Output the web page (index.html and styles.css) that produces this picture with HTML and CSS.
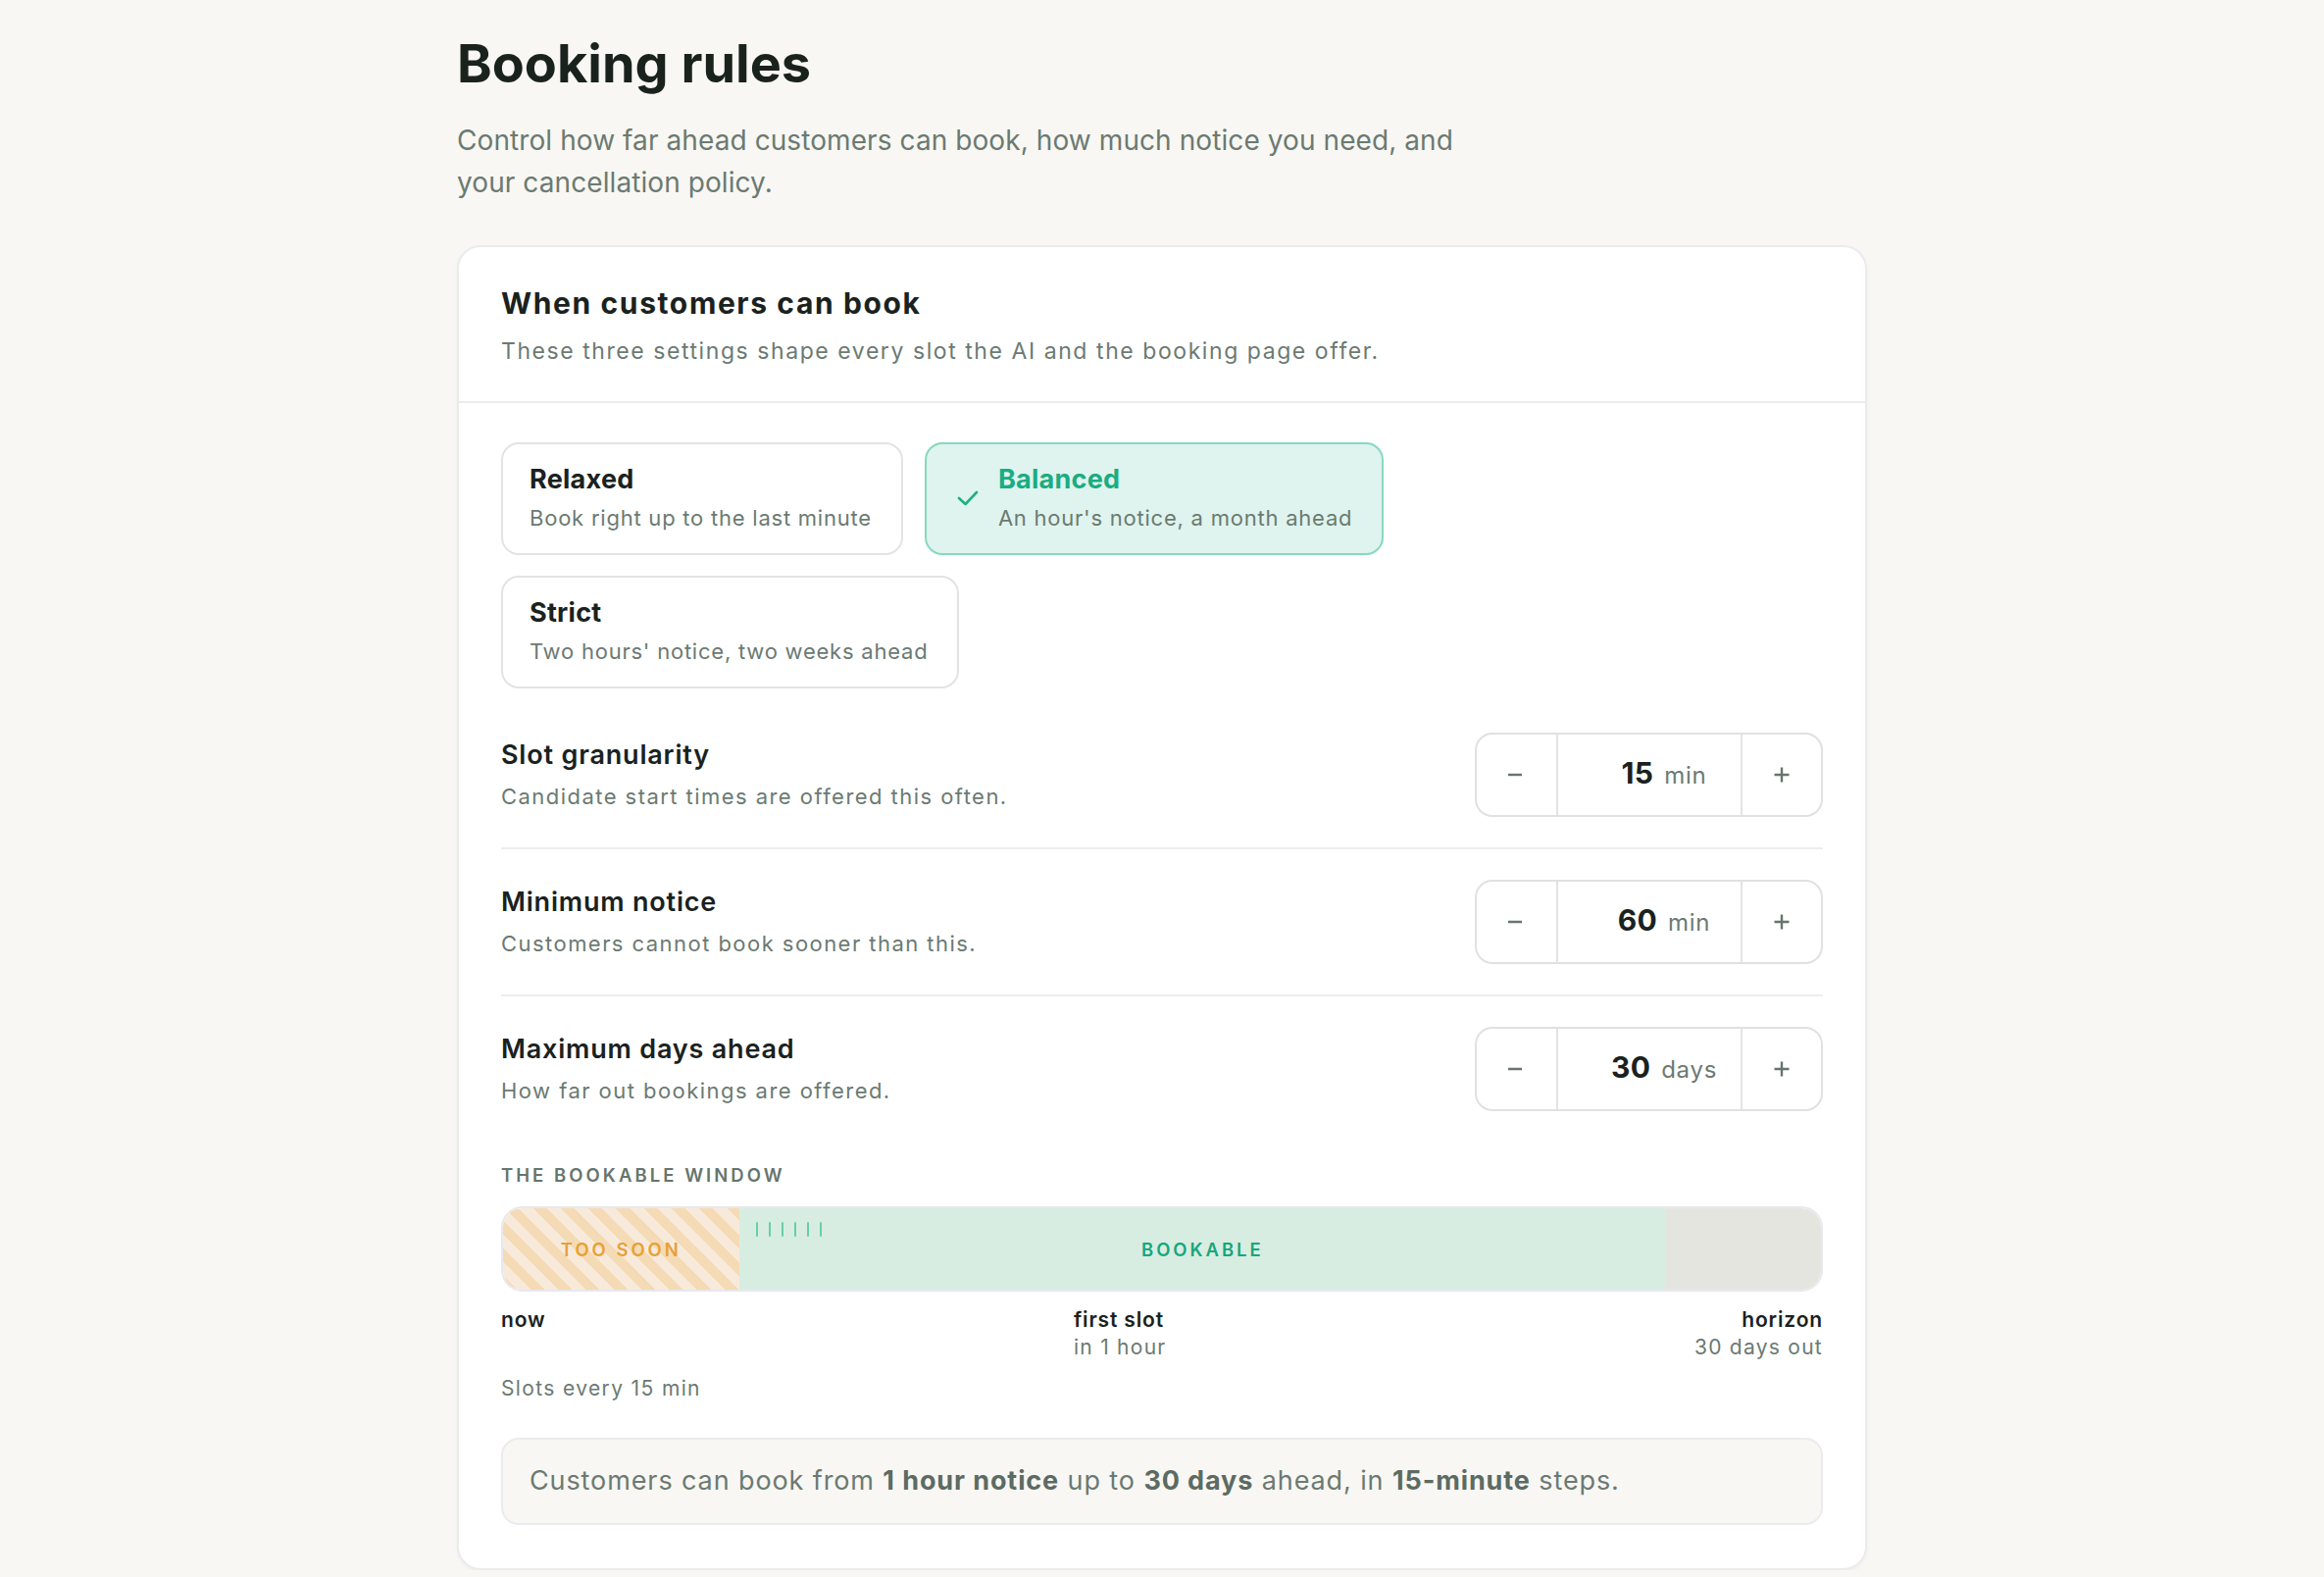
FILE: index.html
```html
<!DOCTYPE html>
<html lang="en">
<head>
<meta charset="utf-8">
<title>Booking rules</title>
<link rel="stylesheet" href="styles.css">
</head>
<body>
<main class="page">
  <h1 class="page-title">Booking rules</h1>
  <p class="page-sub">Control how far ahead customers can book, how much notice you need, and your cancellation policy.</p>

  <section class="card">
    <header class="card-head">
      <h2 class="card-title">When customers can book</h2>
      <p class="card-desc">These three settings shape every slot the AI and the booking page offer.</p>
    </header>

    <div class="card-body">
      <div class="presets">
        <button class="preset">
          <span class="preset-text">
            <span class="preset-title">Relaxed</span>
            <span class="preset-desc">Book right up to the last minute</span>
          </span>
        </button>
        <button class="preset preset-active">
          <svg class="check" width="22" height="16" viewBox="0 0 22 16"><polyline points="2,8 8.5,14 20,2" fill="none" stroke="#1fae86" stroke-width="2.6" stroke-linecap="round" stroke-linejoin="round"/></svg>
          <span class="preset-text">
            <span class="preset-title">Balanced</span>
            <span class="preset-desc">An hour's notice, a month ahead</span>
          </span>
        </button>
        <button class="preset">
          <span class="preset-text">
            <span class="preset-title">Strict</span>
            <span class="preset-desc">Two hours' notice, two weeks ahead</span>
          </span>
        </button>
      </div>

      <div class="settings">
        <div class="setting">
          <div class="setting-text">
            <div class="setting-label">Slot granularity</div>
            <div class="setting-desc">Candidate start times are offered this often.</div>
          </div>
          <div class="stepper">
            <button class="step-btn"><svg width="16" height="16" viewBox="0 0 16 16"><line x1="1" y1="8" x2="15" y2="8" stroke="#66756d" stroke-width="2.4"/></svg></button>
            <div class="step-value"><span class="num">15</span><span class="unit">min</span></div>
            <button class="step-btn step-plus"><svg width="16" height="16" viewBox="0 0 16 16"><line x1="0.5" y1="8" x2="15.5" y2="8" stroke="#66756d" stroke-width="2.4"/><line x1="8" y1="0.5" x2="8" y2="15.5" stroke="#66756d" stroke-width="2.4"/></svg></button>
          </div>
        </div>
        <div class="setting">
          <div class="setting-text">
            <div class="setting-label">Minimum notice</div>
            <div class="setting-desc">Customers cannot book sooner than this.</div>
          </div>
          <div class="stepper">
            <button class="step-btn"><svg width="16" height="16" viewBox="0 0 16 16"><line x1="1" y1="8" x2="15" y2="8" stroke="#66756d" stroke-width="2.4"/></svg></button>
            <div class="step-value"><span class="num">60</span><span class="unit">min</span></div>
            <button class="step-btn step-plus"><svg width="16" height="16" viewBox="0 0 16 16"><line x1="0.5" y1="8" x2="15.5" y2="8" stroke="#66756d" stroke-width="2.4"/><line x1="8" y1="0.5" x2="8" y2="15.5" stroke="#66756d" stroke-width="2.4"/></svg></button>
          </div>
        </div>
        <div class="setting">
          <div class="setting-text">
            <div class="setting-label">Maximum days ahead</div>
            <div class="setting-desc">How far out bookings are offered.</div>
          </div>
          <div class="stepper">
            <button class="step-btn"><svg width="16" height="16" viewBox="0 0 16 16"><line x1="1" y1="8" x2="15" y2="8" stroke="#66756d" stroke-width="2.4"/></svg></button>
            <div class="step-value"><span class="num">30</span><span class="unit">days</span></div>
            <button class="step-btn step-plus"><svg width="16" height="16" viewBox="0 0 16 16"><line x1="0.5" y1="8" x2="15.5" y2="8" stroke="#66756d" stroke-width="2.4"/><line x1="8" y1="0.5" x2="8" y2="15.5" stroke="#66756d" stroke-width="2.4"/></svg></button>
          </div>
        </div>
      </div>

      <div class="window">
        <div class="window-label">THE BOOKABLE WINDOW</div>
        <div class="bar">
          <div class="seg seg-soon" style="width: 17.9%"><span>TOO SOON</span></div>
          <div class="seg seg-book" style="width: 70.35%">
            <div class="ticks"><i></i><i></i><i></i><i></i><i></i><i></i></div>
            <span>BOOKABLE</span>
          </div>
          <div class="seg seg-horizon"></div>
        </div>
        <div class="marks">
          <div class="mark"><div class="mark-title">now</div></div>
          <div class="mark"><div class="mark-title">first slot</div><div class="mark-sub">in 1 hour</div></div>
          <div class="mark mark-end"><div class="mark-title">horizon</div><div class="mark-sub">30 days out</div></div>
        </div>
        <div class="slots-note">Slots every 15 min</div>
      </div>

      <div class="summary">Customers can book from <b>1 hour notice</b> up to <b>30 days</b> ahead, in <b>15-minute</b> steps.</div>
    </div>
  </section>
</main>
</body>
</html>
```

FILE: styles.css
```css
* { box-sizing: border-box; }

html, body {
  margin: 0;
  padding: 0;
}

body {
  background: #f9f7f3;
  font-family: "Inter", "Liberation Sans", sans-serif;
  color: #1b231f;
}

.page {
  width: 1438px;
  margin: 0 auto;
  padding-top: 33px;
}

.page-title {
  margin: 0;
  font-size: 54px;
  line-height: 64px;
  font-weight: 700;
  letter-spacing: 0;
  color: #1a221e;
}

.page-sub {
  margin: 25px 0 0;
  max-width: 1050px;
  font-size: 28px;
  line-height: 43px;
  color: #6b7a72;
  letter-spacing: 0.003em;
}

.card {
  margin-top: 42px;
  background: #fff;
  border: 2px solid #ebebef;
  border-radius: 24px;
  box-shadow: 0 2px 4px rgba(30, 30, 40, 0.04);
}

.card-head {
  padding: 39px 43px 34px;
  border-bottom: 2px solid #ececf0;
}

.card-title {
  margin: 0;
  font-size: 30px;
  line-height: 37px;
  font-weight: 700;
  color: #1a221e;
  letter-spacing: 0.054em;
}

.card-desc {
  margin: 13px 0 0;
  font-size: 23px;
  line-height: 34px;
  color: #6b7a72;
  letter-spacing: 0.068em;
}

.card-body {
  padding: 40px 43px 44px;
}

.presets {
  display: flex;
  flex-wrap: wrap;
  gap: 21px 22px;
  margin-bottom: 14px;
}

.preset {
  display: flex;
  align-items: center;
  gap: 20px;
  padding: 18px 30px 20px 27px;
  background: #fff;
  border: 2px solid #e2e4e2;
  border-radius: 18px;
  font-family: inherit;
  text-align: left;
  cursor: pointer;
}

.preset-active {
  padding-left: 31px;
  padding-right: 30px;
  background: #dff4ee;
  border-color: #86d9c0;
}

.check {
  display: block;
  flex: none;
}

.preset-text {
  display: flex;
  flex-direction: column;
  gap: 7px;
}

.preset-title {
  font-size: 27px;
  line-height: 35px;
  font-weight: 700;
  color: #1a221e;
  letter-spacing: 0.01em;
}

.preset-active .preset-title {
  color: #1aac82;
}

.preset-desc {
  font-size: 22px;
  line-height: 31px;
  color: #6b7a72;
  letter-spacing: 0.035em;
}

.setting {
  display: flex;
  align-items: center;
  justify-content: space-between;
  padding: 31px 0;
  border-bottom: 2px solid #ecedf0;
}

.setting:last-child {
  border-bottom: none;
}

.setting-label {
  font-size: 27px;
  line-height: 35px;
  font-weight: 600;
  color: #1a221e;
  letter-spacing: 0.03em;
}

.setting-desc {
  margin-top: 9px;
  font-size: 22px;
  line-height: 33px;
  color: #6b7a72;
  letter-spacing: 0.066em;
}

.stepper {
  display: flex;
  width: 355px;
  height: 86px;
  border: 2px solid #dfe2df;
  border-radius: 18px;
  background: #fff;
  overflow: hidden;
}

.step-btn {
  display: flex;
  align-items: center;
  justify-content: center;
  width: 81px;
  padding: 0 3px 0 0;
  border: none;
  background: transparent;
  cursor: pointer;
}

.step-btn svg {
  display: block;
}

.step-plus {
  width: 80px;
  padding: 0;
}

.step-value {
  flex: 1;
  display: flex;
  align-items: baseline;
  justify-content: center;
  gap: 11px;
  padding-left: 30px;
  padding-top: 19px;
  border-left: 2px solid #e2e4e2;
  border-right: 2px solid #e2e4e2;
}

.num {
  font-size: 30px;
  font-weight: 700;
  color: #1a221e;
  line-height: 40px;
  letter-spacing: 0.01em;
}

.unit {
  font-size: 24px;
  color: #6b7a72;
  letter-spacing: 0.03em;
}

.window {
  margin-top: 22px;
}

.window-label {
  font-size: 18.5px;
  line-height: 25px;
  font-weight: 600;
  letter-spacing: 0.165em;
  color: #66756d;
}

.bar {
  display: flex;
  margin-top: 19px;
  height: 87px;
  border: 2px solid #e8e8ee;
  border-radius: 22px;
  overflow: hidden;
}

.seg {
  position: relative;
  display: flex;
  align-items: center;
  justify-content: center;
  font-size: 18.5px;
  font-weight: 600;
  letter-spacing: 0.16em;
}

.seg-soon {
  background: repeating-linear-gradient(45deg, #f4dbb5 0 10px, #f8eadb 10px 20px);
  color: #e8a035;
}

.seg-book {
  background: #d8ede2;
  color: #17a67d;
}

.seg-horizon {
  flex: 1;
  background: #e5e5e0;
}

.ticks {
  position: absolute;
  left: 17px;
  top: 14px;
  display: flex;
  gap: 10.5px;
}

.ticks i {
  display: block;
  width: 2.5px;
  height: 15px;
  border-radius: 2px;
  background: #68cdab;
}

.marks {
  display: flex;
  justify-content: space-between;
  margin-top: 15px;
}

.mark-title {
  font-size: 21px;
  line-height: 28px;
  font-weight: 600;
  color: #1a221e;
  letter-spacing: 0.04em;
}

.mark-sub {
  font-size: 21px;
  line-height: 28px;
  color: #6b7a72;
  letter-spacing: 0.06em;
}

.mark-end {
  text-align: right;
}

.slots-note {
  margin-top: 14px;
  font-size: 21px;
  line-height: 28px;
  color: #6b7a72;
  letter-spacing: 0.065em;
}

.summary {
  margin-top: 36px;
  padding: 27px 27px 28px;
  background: #f9f7f3;
  border: 2px solid #ebebef;
  border-radius: 18px;
  font-size: 27px;
  line-height: 30px;
  color: #6b7a72;
  letter-spacing: 0.033em;
}

.summary b {
  font-weight: 700;
  color: #5c6b63;
}
```
